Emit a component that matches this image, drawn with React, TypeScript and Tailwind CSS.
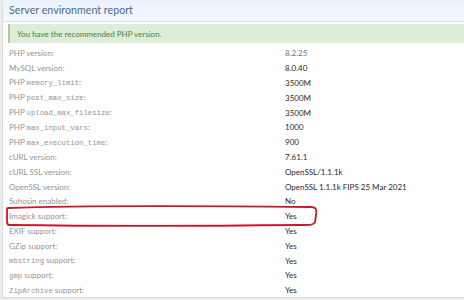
import React from "react";

const mono = "font-['Liberation_Mono',monospace] text-[7.3px]";

type Row = { label: React.ReactNode; value: string; blue?: boolean };

const rows: Row[] = [
  { label: <>PHP version:</>, value: "8.2.25", blue: true },
  { label: <>MySQL version:</>, value: "8.0.40" },
  { label: <>PHP <span className={mono}>memory_limit</span>:</>, value: "3500M" },
  { label: <>PHP <span className={mono}>post_max_size</span>:</>, value: "3500M" },
  { label: <>PHP <span className={mono}>upload_max_filesize</span>:</>, value: "3500M" },
  { label: <>PHP <span className={mono}>max_input_vars</span>:</>, value: "1000" },
  { label: <>PHP <span className={mono}>max_execution_time</span>:</>, value: "900" },
  { label: <>cURL version:</>, value: "7.61.1" },
  { label: <>cURL SSL version:</>, value: "OpenSSL/1.1.1k" },
  { label: <>OpenSSL version:</>, value: "OpenSSL 1.1.1k FIPS 25 Mar 2021" },
  { label: <>Suhosin enabled:</>, value: "No" },
  { label: <>Imagick support:</>, value: "Yes" },
  { label: <>EXIF support:</>, value: "Yes" },
  { label: <>GZip support:</>, value: "Yes" },
  { label: <><span className={mono}>mbstring</span> support:</>, value: "Yes" },
  { label: <><span className={mono}>gmp</span> support:</>, value: "Yes" },
  { label: <><span className={mono}>ZipArchive</span> support:</>, value: "Yes" },
];

export default function App() {
  return (
    <div className="w-[464px] h-[300px] bg-[#ececec] overflow-hidden font-['Lato',sans-serif]">
      <div className="ml-[2px] h-[298px] bg-white border-l border-b border-[#dcdcdc] relative">
        <div className="h-[22px] bg-gradient-to-b from-[#eaf2fb] to-[#f4f8fd] border-b border-[#d6e2ee] pl-[6px] flex items-center">
          <span className="text-[10.7px] text-[#4b6b8e] leading-none">Server environment report</span>
        </div>
        <div className="mt-[2px] ml-[5px] h-[19px] bg-[#dcefd6] border-l-2 border-[#a8cc9a] flex items-center pl-[7px]">
          <span className="text-[8px] text-[#4f7a4a]">You have the recommended PHP version.</span>
        </div>
        <div className="pt-[3px]">
          {rows.map((r, i) => (
            <div key={i} className="flex h-[14.8px] items-center text-[8px] leading-none">
              <div className="w-[282px] pl-[6px] text-[#949494] whitespace-nowrap">{r.label}</div>
              <div className={r.blue ? "text-[#5d7896]" : "text-[#2a2a2a]"}>{r.value}</div>
            </div>
          ))}
        </div>
        <svg className="absolute left-[2px] top-[205px]" width="314" height="22" viewBox="0 0 314 22" fill="none">
          <path d="M3 3 C 60 1, 200 1, 305 2 C 311 2, 312 4, 311 10 L 310 17 C 309 20, 306 20, 296 20 C 200 21, 80 21, 4 20 C 2 20, 2 18, 2 14 L 2 5 C 2 3, 2 3, 3 3 Z" stroke="#c9182b" strokeWidth="1.8" />
        </svg>
      </div>
    </div>
  );
}
